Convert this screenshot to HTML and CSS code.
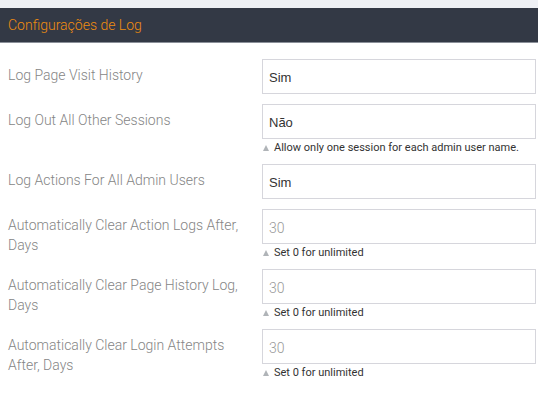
FILE: index.html
```html
<!DOCTYPE html>
<html lang="pt">
<head>
<meta charset="utf-8">
<title>Configurações de Log</title>
<link rel="stylesheet" href="styles.css">
</head>
<body>
<div class="top-strip"></div>
<div class="panel-head"><h2 class="panel-title">Configurações de Log</h2></div>
<div class="form">
  <div class="row">
    <label class="label">Log Page Visit History</label>
    <div class="field"><div class="input">Sim</div></div>
  </div>
  <div class="row">
    <label class="label">Log Out All Other Sessions</label>
    <div class="field"><div class="input">Não</div><div class="help"><span class="tri"></span>Allow only one session for each admin user name.</div></div>
  </div>
  <div class="row">
    <label class="label">Log Actions For All Admin Users</label>
    <div class="field"><div class="input">Sim</div></div>
  </div>
  <div class="row">
    <label class="label">Automatically Clear Action Logs After, Days</label>
    <div class="field"><div class="input placeholder">30</div><div class="help"><span class="tri"></span>Set 0 for unlimited</div></div>
  </div>
  <div class="row">
    <label class="label">Automatically Clear Page History Log, Days</label>
    <div class="field"><div class="input placeholder">30</div><div class="help"><span class="tri"></span>Set 0 for unlimited</div></div>
  </div>
  <div class="row">
    <label class="label">Automatically Clear Login Attempts After, Days</label>
    <div class="field"><div class="input placeholder">30</div><div class="help"><span class="tri"></span>Set 0 for unlimited</div></div>
  </div>
</div>
</body>
</html>
```
FILE: styles.css
```css
* { box-sizing: border-box; }
html, body { margin: 0; padding: 0; background: #fff; }
body { font-family: Roboto, "Noto Sans", sans-serif; width: 538px; overflow: hidden; }
.top-strip { height: 8px; background: #eef0f4; }
.panel-head {
  height: 35px;
  background: #333945;
  border-bottom: 1px solid #8b9099;
  display: flex;
  align-items: center;
  padding-left: 8px;
}
.panel-title {
  margin: 0;
  font-weight: 300;
  font-size: 14px;
  color: #ef8c10;
  line-height: 20px;
  padding-bottom: 1px;
}
.form { padding: 16px 2px 0 8px; }
.row {
  display: grid;
  grid-template-columns: 254px 1fr;
  margin-bottom: 10px;
}
.label {
  font-size: 14px;
  font-weight: 300;
  line-height: 20px;
  color: #858585;
  padding: 6px 10px 0 0;
}
.input {
  height: 35px;
  border: 1px solid #d6d6dc;
  padding: 0 6px;
  display: flex;
  align-items: center;
  font-family: "Liberation Sans", Arial, sans-serif;
  font-size: 13px;
  color: #333;
  padding-top: 1px;
}
.input.placeholder {
  font-family: Roboto, sans-serif;
  font-weight: 300;
  font-size: 14px;
  color: #999;
  padding-top: 2px;
}
.help {
  font-size: 11px;
  line-height: 15px;
  height: 15px;
  padding-top: 1px;
  color: #333;
  display: flex;
  align-items: center;
}
.tri {
  width: 0; height: 0;
  border-left: 3.5px solid transparent;
  border-right: 3.5px solid transparent;
  border-bottom: 6px solid #b0b4b8;
  margin: 1px 5px 0 1px;
}
```
